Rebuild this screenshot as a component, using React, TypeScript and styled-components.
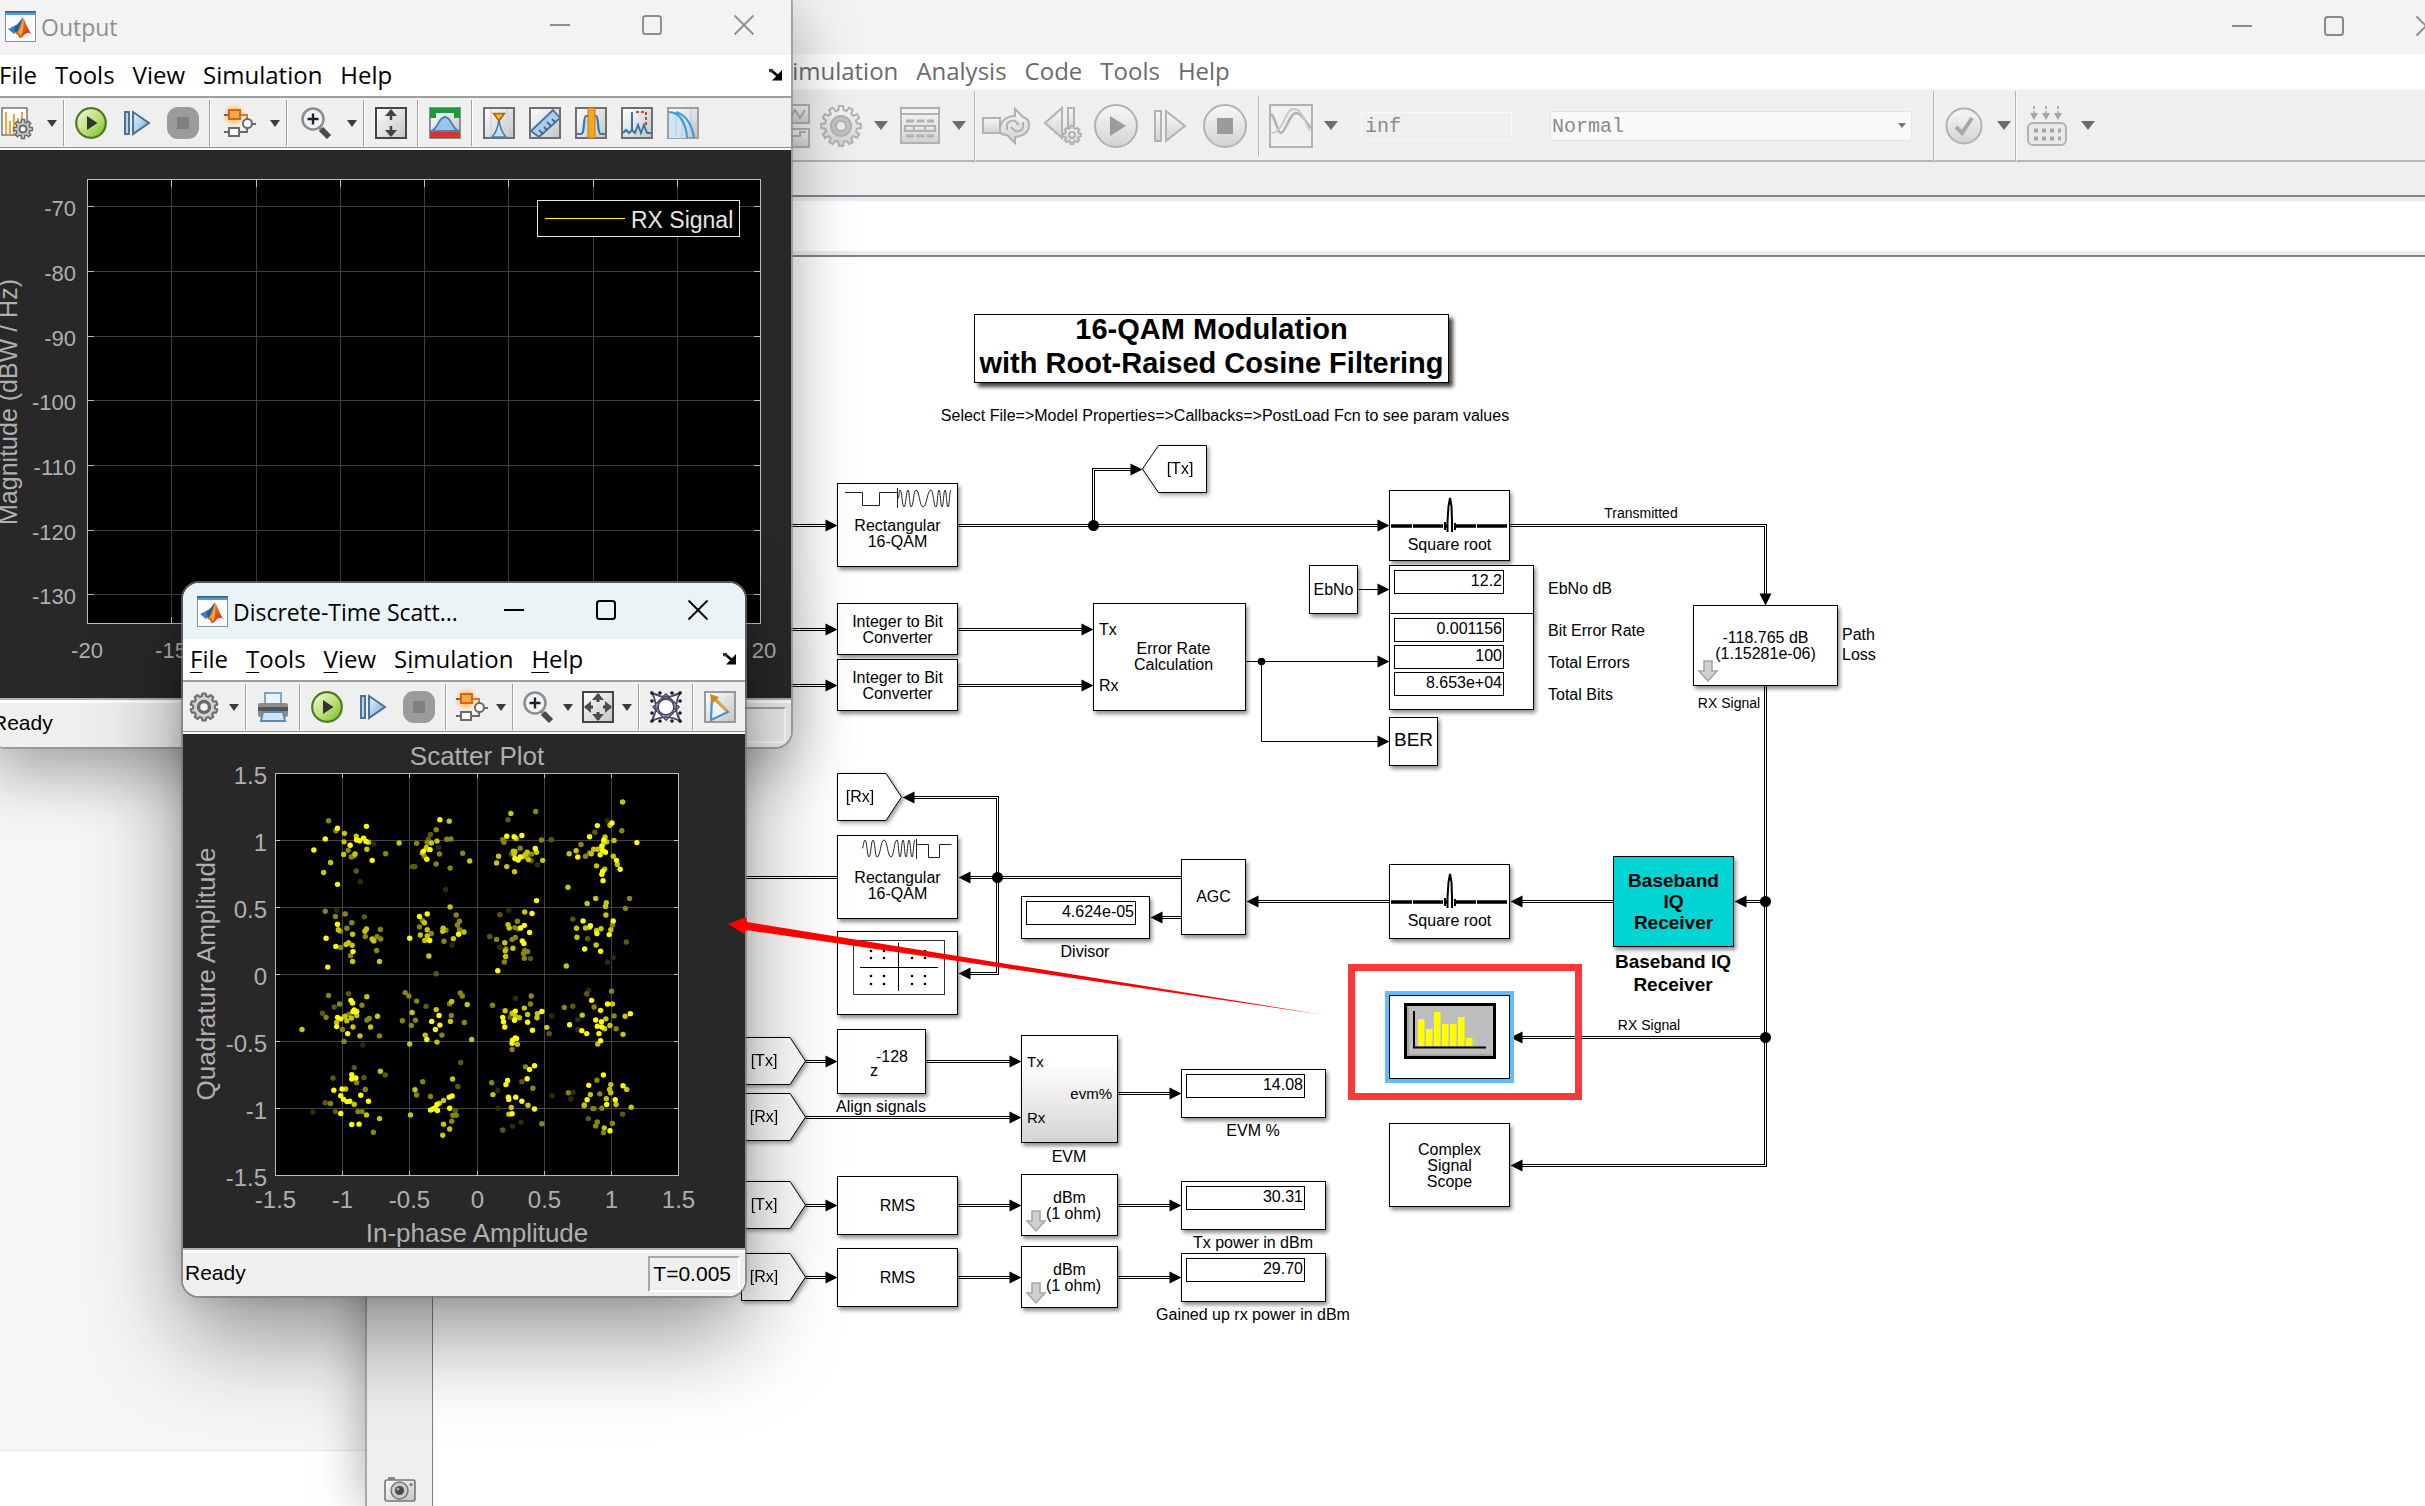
import React from "react";
import styled, { createGlobalStyle, css } from "styled-components";

const UI = `"Open Sans", "Noto Sans", sans-serif`;
const ARIAL = `"Liberation Sans", Arial, sans-serif`;

const GlobalStyle = createGlobalStyle`
  *, *::before, *::after { box-sizing: border-box; }
  html, body, #root { height: 100%; }
  body { margin: 0; background: #fff; font-family: ${UI}; overflow: hidden; }
  button { font: inherit; color: inherit; background: none; border: 0; padding: 0; cursor: default; }
  svg { display: block; overflow: visible; }
`;

/* ---------- desktop and windows ---------- */

const Desktop = styled.main`
  position: relative;
  height: 100%;
  min-height: 100vh;
  overflow: hidden;
`;

const PageBehind = styled.div`
  height: 1451px;
  background: #f5f6f8;
  border-bottom: 1px solid #e2e4e7;
`;

const Window = styled.section<{ $shadow: string; $radius?: string }>`
  position: absolute;
  display: flex;
  flex-direction: column;
  border-radius: ${(p) => p.$radius ?? "0"};
  box-shadow: ${(p) => p.$shadow};
`;

const ModelWindow = styled(Window)`
  left: 365px;
  right: -48px;
  top: 0;
  bottom: 0;
  border-left: 2px solid #a8a8a8;
  background: #efefef;
`;

const OutputWindow = styled(Window)`
  left: -10px;
  top: -12px;
  width: 801px;
  height: 759px;
`;

const ScatterWindow = styled(Window)`
  left: 183px;
  top: 583px;
  width: 562px;
  height: 713px;
`;

const Clip = styled.div`
  flex: 1;
  min-height: 0;
  display: flex;
  flex-direction: column;
  overflow: hidden;
  border-radius: 16px;
  background: #efefef;
`;

const TitleBar = styled.header<{ $h: number; $bg: string; $color: string; $top?: number; $left?: number }>`
  flex: none;
  display: flex;
  align-items: center;
  height: ${(p) => p.$h}px;
  padding: ${(p) => p.$top ?? 0}px 0 0 ${(p) => p.$left ?? 8}px;
  background: ${(p) => p.$bg};
  color: ${(p) => p.$color};
  font-size: 23px;
`;

const TitleText = styled.span`
  flex: 1;
  padding: 2px 0 0 5px;
  line-height: 30px;
  white-space: nowrap;
`;

const WindowControls = styled.div`
  display: flex;
  margin-left: auto;
`;

const WindowButton = styled.button`
  width: 92px;
  height: 50px;
  padding: 0 2px 2px 0;
  display: grid;
  place-items: center;
`;

const MenuBar = styled.nav<{ $h: number; $left: number; $color?: string }>`
  flex: none;
  display: flex;
  align-items: center;
  gap: 18px;
  height: ${(p) => p.$h}px;
  padding: 0 8px 2px ${(p) => p.$left}px;
  background: #fff;
  color: ${(p) => p.$color ?? "#000"};
  font-size: 24px;
  line-height: 32px;
`;

const MenuButton = styled.button`
  white-space: nowrap;
  u { text-underline-offset: 4px; text-decoration-thickness: 1px; }
`;

const DockButton = styled.button`
  margin-left: auto;
`;

const ToolBar = styled.div<{ $left?: number }>`
  flex: none;
  display: flex;
  align-items: center;
  height: 54px;
  padding-left: ${(p) => p.$left ?? 0}px;
  background: #efefef;
  border-top: 2px solid #9f9f9f;
  border-bottom: 2px solid #fff;
  box-shadow: inset 0 -1px 0 #8f8f8f;
`;

const ToolButton = styled.button`
  flex: none;
  width: 46px;
  height: 46px;
  display: grid;
  place-items: center;
`;

const SplitButton = styled.button<{ $wide?: boolean }>`
  flex: none;
  width: ${(p) => (p.$wide ? 69 : 59)}px;
  height: 46px;
  padding-left: ${(p) => (p.$wide ? 10 : 6)}px;
  display: flex;
  align-items: center;
  gap: ${(p) => (p.$wide ? 14 : 8)}px;
`;

const Divider = styled.span`
  flex: none;
  width: 2px;
  height: 46px;
  margin: 0 3px;
  border-left: 1px solid #a0a0a0;
  border-right: 1px solid #fff;
`;

const ChartArea = styled.div<{ $h: number }>`
  flex: none;
  height: ${(p) => p.$h}px;
  background: #282828;
`;

const StatusBar = styled.footer`
  flex: 1;
  display: flex;
  align-items: center;
  justify-content: space-between;
  padding: 0 5px 1px 2px;
  border-top: 2px solid #b0b0b0;
  box-shadow: inset 0 3px 0 #fff;
  background: #efefef;
  font: 21px/24px ${ARIAL};
  color: #000;
`;

const StatusCell = styled.output<{ $w?: number }>`
  min-width: ${(p) => p.$w ?? 0}px;
  height: 36px;
  margin-top: 3px;
  padding: 4px 7px 0 3px;
  border: 2px solid #fff;
  border-top-color: #a8a8a8;
  border-left-color: #a8a8a8;
`;

/* ---------- model window parts ---------- */

const ModelBars = styled.div`
  flex: none;
  height: 73px;
  display: flex;
  align-items: center;
  padding-left: 425px;
  border-top: 2px solid #f3f3f3;
  border-bottom: 2px solid #b6b6b6;
`;

const ModelTool = styled.button<{ $w: number }>`
  flex: none;
  width: ${(p) => p.$w}px;
  height: 60px;
  display: grid;
  place-items: center;
`;

const ModelCaret = styled.span<{ $w: number }>`
  flex: none;
  width: ${(p) => p.$w}px;
  display: grid;
  place-items: center;
`;

const ModelDivider = styled.span<{ $short?: boolean }>`
  flex: none;
  width: 2px;
  height: ${(p) => (p.$short ? 60 : 70)}px;
  border-left: 1px solid #b4b4b4;
  border-right: 1px solid #f8f8f8;
`;

const StopTime = styled.input`
  width: 151px;
  height: 28px;
  margin-left: 21px;
  padding: 2px 3px 0;
  border: 1px solid #f8f8f8;
  background: #efefef;
  color: #8a8a8a;
  font: 20px/24px "Liberation Mono", monospace;
`;

const SelectWrap = styled.div`
  display: flex;
  align-items: center;
  width: 362px;
  margin: 0 21px 0 38px;
  height: 30px;
  border: 1px solid #e4e4e4;
  border-radius: 3px;
  background: #f9f9f9;
  padding-right: 5px;
`;

const ModeSelect = styled.select`
  flex: 1;
  appearance: none;
  border: 0;
  background: none;
  padding: 2px 0 0 1px;
  color: #8a8a8a;
  font: 20px/24px "Liberation Mono", monospace;
`;

const Spacer = styled.div`
  flex: none;
  height: 33px;
`;

const PathBar = styled.div`
  flex: none;
  height: 62px;
  background: #fff;
  border: solid #80838f;
  border-width: 2px 0;
  box-shadow: inset 0 4px 0 #ececf0, inset 0 -4px 0 #ececf0;
`;

const Workspace = styled.div`
  flex: 1;
  min-height: 0;
  display: flex;
`;

const Palette = styled.aside`
  flex: none;
  width: 66px;
  display: flex;
  flex-direction: column;
  justify-content: flex-end;
  align-items: center;
  padding-bottom: 4px;
  border-right: 1px solid #7f8088;
`;

const Canvas = styled.div`
  position: relative;
  flex: 1;
  background: #fff;
  font: 16px/16px ${ARIAL};
  color: #000;
`;

const OX = 433;
const OY = 257;

const Wires = styled.svg`
  position: absolute;
  left: 0;
  top: 0;
`;

const NodeBox = styled.div<{ $x: number; $y: number; $w: number; $h: number; $pt?: number; $fill?: string }>`
  position: absolute;
  left: ${(p) => p.$x - OX}px;
  top: ${(p) => p.$y - OY}px;
  width: ${(p) => p.$w}px;
  height: ${(p) => p.$h}px;
  padding-top: ${(p) => p.$pt ?? 0}px;
  display: flex;
  flex-direction: column;
  align-items: center;
  justify-content: center;
  text-align: center;
  white-space: pre;
  border: 1px solid #000;
  background: ${(p) => p.$fill ?? "#fff"};
  box-shadow: 2px 3px 4px rgba(0, 0, 0, 0.45);
`;

const Title = styled(NodeBox)`
  margin: 0;
  padding-bottom: 5px;
  font-weight: 700;
  font-size: 29px;
  line-height: 34px;
  box-shadow: 4px 4px 4px rgba(0, 0, 0, 0.75);
`;

const IqReceiver = styled(NodeBox)`
  font-weight: 700;
  font-size: 19px;
  line-height: 21px;
`;

const BigNode = styled(NodeBox)`
  padding-bottom: 4px;
  font-size: 19px;
  line-height: 20px;
`;

const SelectedNode = styled(NodeBox)`
  box-shadow: 0 0 0 4px #63bdf8;
`;

const DisplayBox = styled(NodeBox)`
  align-items: flex-start;
  justify-content: flex-start;
  gap: 3px;
  padding: 4px;
`;

const Value = styled.output<{ $w: number }>`
  width: ${(p) => p.$w}px;
  height: 24px;
  padding: 2px 1px;
  border: 1px solid #000;
  text-align: right;
`;

const Label = styled.div<{ $x: number; $y: number; $size?: number; $lh?: number; $bold?: boolean; $left?: boolean }>`
  position: absolute;
  left: ${(p) => p.$x - OX}px;
  top: ${(p) => p.$y - OY}px;
  transform: translate(${(p) => (p.$left ? "0" : "-50%")}, -50%);
  font-size: ${(p) => p.$size ?? 16}px;
  line-height: ${(p) => p.$lh ?? 16}px;
  font-weight: ${(p) => (p.$bold ? 700 : 400)};
  text-align: ${(p) => (p.$left ? "left" : "center")};
  white-space: pre;
`;

const TagBox = styled.div<{ $x: number; $y: number }>`
  position: absolute;
  left: ${(p) => p.$x - OX}px;
  top: ${(p) => p.$y - OY}px;
  width: 65px;
  height: 48px;
  display: flex;
  align-items: center;
  filter: drop-shadow(2px 2px 2px rgba(0, 0, 0, 0.4));
`;

const TagText = styled.span<{ $flip?: boolean }>`
  position: relative;
  width: 46px;
  text-align: center;
  ${(p) => p.$flip && css`margin-left: 15px;`}
`;

const TagShape = styled.svg`
  position: absolute;
  inset: 0;
`;

const Annotation = styled.svg`
  position: absolute;
  left: 0;
  top: 0;
  width: 100%;
  height: 100%;
  pointer-events: none;
`;

/* ---------- icons ---------- */

const DefsSvg = styled.svg`
  position: absolute;
`;

const Defs = () => (
  <DefsSvg width="0" height="0" aria-hidden>
    <defs>
      <linearGradient id="green" x1="0" y1="0" x2="1" y2="1">
        <stop offset="0" stopColor="#f4fbe6" />
        <stop offset="0.6" stopColor="#b4dc6c" />
        <stop offset="1" stopColor="#6fb52c" />
      </linearGradient>
      <linearGradient id="blue" x1="0" y1="0" x2="1" y2="1">
        <stop offset="0" stopColor="#eef6fc" />
        <stop offset="1" stopColor="#6aa7dc" />
      </linearGradient>
      <linearGradient id="silver" x1="0" y1="0" x2="1" y2="1">
        <stop offset="0" stopColor="#ffffff" />
        <stop offset="1" stopColor="#c4c4c4" />
      </linearGradient>
      <linearGradient id="dim" x1="0" y1="0" x2="0" y2="1">
        <stop offset="0" stopColor="#f8f8f8" />
        <stop offset="1" stopColor="#d2d2d2" />
      </linearGradient>
      <linearGradient id="flame" x1="0" y1="0" x2="1" y2="1">
        <stop offset="0" stopColor="#f7c04a" />
        <stop offset="0.5" stopColor="#e5601e" />
        <stop offset="1" stopColor="#a81e10" />
      </linearGradient>
      <radialGradient id="glow">
        <stop offset="0.4" stopColor="#ffb347" stopOpacity="0.9" />
        <stop offset="1" stopColor="#ffcf80" stopOpacity="0" />
      </radialGradient>
    </defs>
  </DefsSvg>
);

const MatlabIcon = () => (
  <svg width="31" height="31" viewBox="0 0 31 31">
    <rect x="0.5" y="0.5" width="30" height="30" fill="#fbfbfd" stroke="#8b8f96" />
    <rect x="0" y="0" width="31" height="4" fill="#5d9ac8" />
    <path d="M0 0h31v1.500h-31z" fill="#2b5f8c" />
    <path d="M3 18l7-3.500 4 3.500-5 5z" fill="#3d7fc1" />
    <path d="M10 14.500c4-1 6-7 8-8l-3 13-3 3-2.500-2z" fill="#1d5fa0" />
    <path d="M18 6.500c2 2 5 13 9 17-3-3-6-2-8 .5-1 2-2.500 3-4.500 3-.5-2-2-4-4.500-4 4-3 6-11 8-16.500z" fill="url(#flame)" />
    <path d="M18 8c-1 5-3 11-5 14 2 0 3 3 3 4 2-4 3-13 2-18z" fill="#f6a534" />
  </svg>
);

const MinIcon = () => (
  <svg width="20" height="20" viewBox="0 0 20 20"><path d="M0 10h20" stroke="currentColor" strokeWidth="2" /></svg>
);
const MaxIcon = () => (
  <svg width="20" height="20" viewBox="0 0 20 20"><rect x="1" y="1" width="18" height="18" rx="2.500" fill="none" stroke="currentColor" strokeWidth="2" /></svg>
);
const CloseIcon = () => (
  <svg width="20" height="20" viewBox="0 0 20 20"><path d="M0.500 0.500l19 19M19.500 0.500l-19 19" stroke="currentColor" strokeWidth="1.800" /></svg>
);
const DockIcon = () => (
  <svg width="15" height="12" viewBox="0 0 15 12"><path d="M1 2h3l7 6" fill="none" stroke="#000" strokeWidth="2.600" /><path d="M14 1v10.500H4z" fill="#000" /><path d="M1 0h4v3H1z" fill="#333" /></svg>
);
const Caret = () => (
  <svg width="10" height="7" viewBox="0 0 10 7"><path d="M0 0h10L5 7z" fill="#3c3c3c" /></svg>
);
const DimCaret = () => (
  <svg width="14" height="9" viewBox="0 0 14 9"><path d="M0 0h14L7 9z" fill="#6b6d70" /></svg>
);

const Ico = ({ children, size = 32, box = 32 }: { children: React.ReactNode; size?: number; box?: number }) => (
  <svg width={size} height={size} viewBox={`0 0 ${box} ${box}`}>{children}</svg>
);

const gearPath = (cx: number, cy: number, r: number, teeth: number, depth: number) => {
  const pts: string[] = [];
  for (let i = 0; i < teeth; i++) {
    [-0.32, -0.2, 0.2, 0.32].forEach((o, k) => {
      const a = ((i + o) / teeth) * Math.PI * 2;
      const rr = k === 0 || k === 3 ? r - depth : r;
      pts.push(`${(cx + Math.sin(a) * rr).toFixed(2)} ${(cy - Math.cos(a) * rr).toFixed(2)}`);
    });
  }
  return `M${pts.join("L")}Z`;
};

const GearIcon = () => (
  <Ico>
    <path d={gearPath(15, 16, 13.5, 10, 2.5)} fill="#d4d4d4" stroke="#707070" strokeWidth="2.200" strokeLinejoin="round" />
    <circle cx="15" cy="16" r="5.500" fill="#f4f4f4" stroke="#6a6a6a" strokeWidth="3.400" />
  </Ico>
);

const SpectrumGearIcon = () => (
  <Ico>
    <rect x="1" y="1" width="25" height="27" fill="#fdfdfd" stroke="#777" strokeWidth="1.500" />
    <path d="M5 27V5M9 27V14M13 27V7M17 27V11M21 27V5" stroke="#f2a63a" strokeWidth="2" />
    <path d={gearPath(22, 22, 9.5, 8, 2.5)} fill="#c9c9c9" stroke="#6b6b6b" strokeWidth="1.500" />
    <circle cx="22" cy="22" r="3.500" fill="#f5f5f5" stroke="#666" strokeWidth="2" />
  </Ico>
);

const RunIcon = () => (
  <Ico>
    <circle cx="16" cy="16" r="14.800" fill="url(#green)" stroke="#4f7a22" strokeWidth="2.200" />
    <path d="M12 9l10.500 7L12 23z" fill="#333" />
  </Ico>
);
const StepIcon = () => (
  <Ico>
    <rect x="4" y="5" width="4" height="22" fill="#b5d5f0" stroke="#4d7295" strokeWidth="2" />
    <path d="M12 5L28 16 12 27z" fill="url(#blue)" stroke="#4d7295" strokeWidth="2" />
  </Ico>
);
const StopIcon = () => (
  <Ico>
    <rect x="0" y="0" width="32" height="32" rx="11" fill="#9b9b9b" />
    <rect x="10" y="10" width="12" height="12" fill="#7f7f7f" />
  </Ico>
);
const ModelIcon = () => (
  <Ico>
    <circle cx="10" cy="8" r="12" fill="url(#glow)" />
    <path d="M0 8h5M0 25h5M15 25h8v-6M28 17h4" fill="none" stroke="#6b6b6b" strokeWidth="2" />
    <path d="M15 8h8v5" fill="none" stroke="#d8762a" strokeWidth="2" />
    <rect x="5" y="3" width="11" height="9" fill="#f7a548" stroke="#c96a1c" strokeWidth="2" />
    <circle cx="23.500" cy="16.500" r="4.500" fill="#fff" stroke="#6b6b6b" strokeWidth="2" />
    <rect x="5" y="21" width="10" height="8" fill="#fff" stroke="#6b6b6b" strokeWidth="2" />
  </Ico>
);
const ZoomIcon = () => (
  <Ico>
    <path d="M17 19l3 3" stroke="#888" strokeWidth="3" />
    <path d="M20 22l8 8" stroke="#4a4a4a" strokeWidth="6" />
    <circle cx="12" cy="12" r="10.500" fill="#eef6fc" stroke="#8c8c8c" strokeWidth="2.500" />
    <path d="M12 6.500v11M6.500 12h11" stroke="#222" strokeWidth="2.400" />
  </Ico>
);
const Frame = ({ stroke = "#6f6f6f" }: { stroke?: string }) => (
  <rect x="1" y="1" width="30" height="30" fill="url(#silver)" stroke={stroke} strokeWidth="2" />
);
const AutoscaleIcon = () => (
  <Ico>
    <Frame stroke="#454545" />
    <path d="M16 3v10M16 19v10" stroke="#444" strokeWidth="2.500" />
    <path d="M10 9l6-7 6 7zM10 23l6 7 6-7z" fill="#444" />
  </Ico>
);
const MaskIcon = () => (
  <Ico>
    <Frame stroke="#8a8f95" />
    <path d="M1 1h30v10h-6V6H7v5H1z" fill="#1d9a3a" />
    <path d="M1 24c8 0 8-14 15-14s7 14 15 14z" fill="#9cc6e8" stroke="#4a84b8" strokeWidth="2" />
    <rect x="1" y="25" width="30" height="6" fill="#d9342b" />
  </Ico>
);
const CursorIcon = () => (
  <Ico>
    <Frame />
    <path d="M8 2v28M24 2v28" stroke="#cfd6de" strokeWidth="1.500" />
    <path d="M9 30c4-4 6-9 7-18 1 9 3 14 7 18z" fill="#c4dff3" stroke="#4a7da8" strokeWidth="1.600" />
    <path d="M10.500 6.500h11L16 14z" fill="#f6b32c" stroke="#96671a" strokeWidth="1.500" />
  </Ico>
);
const RulerIcon = () => (
  <Ico>
    <Frame />
    <path d="M2 24L24 3l7 8L10 30z" fill="#a9cdea" stroke="#46739c" strokeWidth="1.800" />
    <path d="M14 27l-4-4M18 23l-3-3M22 19l-4-4M26 15l-3-3" stroke="#2f5578" strokeWidth="1.600" />
  </Ico>
);
const ChannelIcon = () => (
  <Ico>
    <Frame />
    <path d="M2 27h4c4 0 2-18 5-18h10c3 0 1 18 5 18h4" fill="#c4dff3" stroke="#3d76a8" strokeWidth="2.200" />
    <rect x="13" y="1" width="7" height="30" fill="#f5a81e" stroke="#c27c10" />
  </Ico>
);
const DistortionIcon = () => (
  <Ico>
    <Frame />
    <path d="M2 26l3-3 3 3 3-3V5v18l3 3 3-8 3 8 3-8 3 8h4" fill="none" stroke="#2f76ac" strokeWidth="2" />
    <path d="M15 5h10v13" fill="none" stroke="#c9432a" strokeWidth="2" strokeDasharray="3 2" />
  </Ico>
);
const CcdfIcon = () => (
  <Ico>
    <Frame stroke="#a0a0a0" />
    <path d="M2 5c10 0 17 10 18 26H2z" fill="#cfe4f6" />
    <path d="M9 10v20M15 16v14M24 3v27" stroke="#b8c8d8" strokeWidth="1" />
    <path d="M2 5c10 0 17 10 18 26M9 5c9 3 16 12 18 26" fill="none" stroke="#3d9bdc" strokeWidth="2.200" />
  </Ico>
);
const PrinterIcon = () => (
  <Ico>
    <path d="M8 2h16v12H8z" fill="#e8f3fc" stroke="#7fa6c8" strokeWidth="2" />
    <rect x="1" y="12" width="30" height="14" rx="2" fill="#8d8d8d" />
    <path d="M1 16h30v4H1z" fill="#555" />
    <path d="M6 21h20l2 9H4z" fill="#cfe4f6" stroke="#5f88ad" strokeWidth="2" />
  </Ico>
);
const FitIcon = () => (
  <Ico>
    <Frame stroke="#454545" />
    <path d="M16 3v8M16 21v8M3 16h8M21 16h8" stroke="#444" strokeWidth="3" />
    <path d="M10 9l6-7 6 7zM10 23l6 7 6-7zM9 10l-7 6 7 6zM23 10l7 6-7 6z" fill="#4d4d4d" />
  </Ico>
);
const TrajectoryIcon = () => (
  <Ico>
    <path d="M2 2h28v28H2z" fill="#fff" />
    <path d="M2 2c9 5 19 5 28 0-5 9-5 19 0 28-9-5-19-5-28 0 5-9 5-19 0-28zM2 2c12 2 26 16 28 28M30 2C18 4 4 18 2 30M16 3l13 13-13 13L3 16z" fill="none" stroke="#4b4769" strokeWidth="1.600" />
    <circle cx="16" cy="16" r="8" fill="#fff" stroke="#4b4769" strokeWidth="1.800" />
    {[[2, 2], [10, 2], [22, 2], [30, 2], [2, 10], [2, 22], [30, 10], [30, 22], [2, 30], [10, 30], [22, 30], [30, 30]].map(([x, y]) => (
      <circle key={`${x}-${y}`} cx={x} cy={y} r="1.800" fill="#1c1c1c" />
    ))}
  </Ico>
);
const ReferenceIcon = () => (
  <Ico>
    <Frame stroke="#9a9a9a" />
    <path d="M8 6l16 15L7 29z" fill="#e9f3fb" stroke="#4d8fc9" strokeWidth="2.200" />
    <path d="M23 20L11 8" stroke="#e0a02c" strokeWidth="3" />
    <path d="M6 3l9 3-7 7z" fill="#c98a1c" />
  </Ico>
);

const DIM = "#b2b2b2";
const CameraIcon = () => (
  <svg width="32" height="25" viewBox="0 0 32 25">
    <path d="M4 0h7v3H4z" fill="#8a8a8a" />
    <rect x="1" y="3" width="30" height="21" rx="2" fill="url(#silver)" stroke="#777" strokeWidth="1.600" />
    <circle cx="15.500" cy="13.500" r="8.500" fill="#c9c9c9" stroke="#777" strokeWidth="1.500" />
    <circle cx="15.500" cy="13.500" r="4.500" fill="#4a4a4a" />
    <circle cx="14" cy="12" r="1.500" fill="#aaa" />
    <circle cx="27" cy="7.500" r="1.500" fill="#777" />
  </svg>
);

/* ---------- spectrum chart ---------- */

const SpectrumChart = () => {
  const xs = Array.from({ length: 9 }, (_, i) => 87 + i * 84.25);
  const ys = [206, 271, 336, 400, 465, 530, 594];
  const named: [number, string][] = [[87, "-20"], [171, "-15"], [764, "20"]];
  return (
    <svg width="801" height="548" viewBox="-10 150 801 548" fontFamily={ARIAL} fontSize="22" fill="#afafaf">
      <rect x="87.500" y="179.500" width="673" height="444" fill="#000" />
      <g stroke="#3e3e3e" strokeWidth="1">
        {xs.slice(1, 8).map((x) => <path key={x} d={`M${Math.round(x) + 0.5} 180V623`} />)}
        {ys.map((y) => <path key={y} d={`M88 ${y + 0.5}H761`} />)}
      </g>
      <g stroke="#bdbdbd" strokeWidth="1">
        {xs.slice(1, 8).map((x) => <path key={x} d={`M${Math.round(x) + 0.5} 180v7M${Math.round(x) + 0.5} 623v-6`} />)}
        {ys.map((y) => <path key={y} d={`M88 ${y + 0.5}h6M761 ${y + 0.5}h-7`} />)}
      </g>
      <rect x="87.500" y="179.500" width="673" height="444" fill="none" stroke="#bdbdbd" />
      {ys.map((y, i) => <text key={y} x="76" y={y + 10} textAnchor="end">{-70 - i * 10}</text>)}
      {named.map(([x, t]) => <text key={t} x={x} y="658" textAnchor="middle">{t}</text>)}
      <text transform="translate(17 402) rotate(-90)" textAnchor="middle" fontSize="25">Magnitude (dBW / Hz)</text>
      <rect x="537.500" y="200.500" width="202" height="36" fill="#000" stroke="#e6e6e6" />
      <path d="M545 218.500h80" stroke="#ffff00" />
      <text x="631" y="228" fontSize="23" fill="#e6e6e6">RX Signal</text>
    </svg>
  );
};

/* ---------- constellation chart ---------- */

/* x, y in chart units (988 by 1088 across the axes), brightness 1-5 */
const SAMPLES: number[][] = [
  [130,128,3],[152,148,5],[148,155,3],[169,162,4],[122,177,5],[94,207,5],[223,143,5],[198,170,4],[216,175,5],[199,180,5],[222,184,5],[228,186,4],[168,185,4],[183,194,5],[241,191,1],[224,205,4],[167,219,4],[195,218,4],[186,226,3],[192,223,3],[237,235,5],[270,217,3],[303,188,4],[135,241,4],[118,268,4],[198,264,2],[208,292,1],[152,300,5],[178,208,3],[206,182,5],
  [403,125,5],[426,129,4],[394,152,3],[380,165,2],[375,177,2],[420,178,3],[430,177,3],[346,189,3],[372,186,3],[382,188,4],[396,183,4],[370,200,4],[363,210,5],[376,206,4],[400,200,1],[402,218,3],[371,232,5],[365,224,3],[394,245,3],[342,252,2],[336,252,2],[428,256,3],[459,216,3],[476,237,4],[417,314,1],[379,206,5],[360,215,4],
  [577,108,4],[570,125,2],[638,103,3],[567,170,5],[557,179,3],[585,171,5],[604,168,5],[590,176,4],[560,186,3],[652,180,3],[676,179,2],[637,203,5],[640,213,4],[600,202,3],[583,210,4],[585,218,4],[547,224,4],[542,242,4],[587,230,5],[595,234,5],[607,225,4],[617,213,4],[620,233,4],[655,235,4],[627,236,2],[642,247,1],[567,252,4],[586,266,4],[617,226,3],[587,211,4],[579,218,2],[600,226,5],[612,220,4],[628,218,3],
  [851,77,4],[825,134,5],[814,128,1],[789,141,5],[820,140,4],[849,155,3],[783,159,2],[770,171,5],[830,181,4],[886,187,5],[749,192,3],[737,209,4],[720,217,4],[741,226,5],[760,224,3],[774,217,4],[790,205,4],[780,205,4],[800,197,5],[804,189,4],[812,185,4],[802,208,5],[809,213,5],[796,220,5],[828,224,4],[836,235,5],[838,246,4],[845,259,5],[787,250,4],[807,259,4],[802,265,5],[800,273,5],[803,290,5],[717,308,4],[808,172,4],[805,180,5],[770,215,3],
  [122,373,3],[150,370,1],[147,387,3],[171,380,3],[218,388,2],[187,404,3],[152,408,5],[154,423,4],[159,427,3],[175,419,3],[189,435,4],[124,446,5],[223,421,4],[219,427,4],[220,441,3],[237,448,4],[249,442,3],[257,422,3],[241,453,4],[148,468,5],[160,471,3],[173,463,4],[179,458,4],[188,465,4],[190,482,5],[184,493,3],[189,509,4],[248,479,3],[255,509,4],[128,524,5],[258,448,3],
  [428,361,4],[372,380,5],[353,387,5],[365,404,4],[360,398,3],[443,383,3],[451,400,3],[446,410,3],[353,415,3],[372,423,4],[382,433,3],[355,437,4],[372,440,4],[366,452,4],[378,452,5],[329,446,5],[411,419,4],[410,427,4],[418,424,3],[451,423,3],[462,429,4],[449,435,5],[436,447,4],[413,454,3],[433,464,1],[376,494,4],[394,542,2],
  [640,344,5],[550,382,2],[572,370,1],[611,375,4],[629,379,5],[570,409,4],[593,400,3],[610,411,5],[601,418,5],[573,418,4],[595,420,3],[587,417,3],[623,430,5],[525,441,2],[542,449,3],[562,458,4],[605,453,5],[609,460,5],[588,444,3],[580,449,3],[550,470,1],[565,475,3],[582,473,4],[563,480,4],[611,479,3],[608,487,3],[564,495,4],[561,510,3],[610,500,3],[625,501,2],[545,534,5],[618,482,3],
  [785,338,4],[764,352,4],[811,350,4],[809,360,4],[868,338,3],[858,365,3],[729,394,2],[754,399,5],[810,383,4],[828,399,5],[826,410,3],[738,419,4],[760,418,4],[772,412,5],[770,416,4],[798,420,4],[787,425,4],[822,423,4],[739,443,4],[788,433,5],[818,436,5],[765,447,2],[860,456,2],[758,475,5],[786,464,4],[797,481,5],[828,498,1],[814,511,1],[713,521,4],
  [130,601,3],[179,596,2],[224,604,4],[157,624,3],[185,614,5],[189,621,5],[212,627,3],[144,632,2],[115,649,2],[124,660,3],[152,660,5],[170,657,4],[180,652,3],[190,645,5],[199,644,5],[199,655,4],[150,674,4],[160,664,5],[175,669,4],[186,662,4],[150,685,5],[164,693,3],[190,686,4],[224,667,3],[230,663,3],[250,657,4],[233,686,4],[177,704,5],[207,710,4],[255,710,3],[168,725,3],[214,735,1],[65,693,4],[193,640,5],
  [318,593,3],[327,602,3],[346,616,3],[369,630,2],[335,647,4],[394,639,4],[401,655,5],[343,668,3],[311,669,3],[333,682,3],[383,671,5],[403,681,5],[392,693,5],[367,708,4],[371,720,5],[408,708,3],[396,727,4],[329,732,4],[432,617,4],[427,623,3],[431,655,3],[429,671,4],[453,594,3],[458,602,3],[470,625,4],[463,674,3],[481,720,4],
  [532,627,3],[588,609,1],[627,602,3],[563,642,4],[588,643,5],[625,624,3],[610,635,4],[557,660,5],[559,672,5],[562,686,5],[588,657,4],[580,649,4],[575,660,2],[598,661,4],[586,668,5],[618,652,4],[642,650,4],[653,644,5],[641,661,4],[618,673,5],[677,656,1],[665,687,4],[630,695,5],[671,704,2],[588,716,5],[591,717,5],[581,722,5],[580,730,5],[593,733,4],[580,747,3],
  [768,587,1],[763,596,2],[824,589,3],[775,614,5],[708,633,3],[729,630,2],[781,632,3],[814,624,5],[826,624,4],[797,641,5],[752,654,4],[741,666,1],[785,667,5],[799,672,5],[810,664,4],[830,656,3],[857,657,4],[870,650,5],[721,680,5],[789,684,5],[800,686,5],[835,691,3],[751,696,5],[763,704,5],[793,704,5],[852,706,4],[797,723,5],[790,732,4],[741,693,1],[820,682,4],[807,691,4],
  [193,796,2],[141,824,2],[187,815,5],[187,827,5],[197,824,5],[217,823,2],[257,806,4],[269,816,2],[199,837,3],[143,857,5],[163,854,5],[172,854,4],[160,872,5],[220,855,3],[209,871,5],[228,887,5],[167,882,5],[175,888,5],[182,887,5],[122,891,2],[135,893,3],[92,916,1],[147,915,2],[160,920,5],[193,895,4],[202,915,3],[212,915,3],[223,924,4],[255,934,4],[187,950,5],[205,949,5],[240,971,3],
  [454,782,2],[361,834,3],[342,856,4],[346,870,3],[434,827,4],[447,847,2],[380,874,3],[433,873,5],[426,876,5],[412,885,4],[396,896,5],[391,905,5],[397,912,5],[380,911,5],[386,908,5],[427,906,5],[441,912,2],[443,925,3],[435,925,3],[331,924,4],[432,941,3],[412,949,4],[427,962,4],[410,979,4],[402,892,4],
  [635,791,5],[623,801,5],[613,794,3],[617,826,5],[604,834,2],[530,837,3],[569,831,5],[565,842,5],[533,869,4],[545,858,1],[631,852,3],[571,876,5],[589,876,5],[572,882,5],[604,887,5],[619,898,4],[635,908,5],[678,872,1],[545,906,1],[578,904,4],[572,922,4],[580,921,5],[602,944,1],[581,955,1],[557,965,2],[653,948,3],
  [804,816,5],[788,830,3],[768,844,5],[822,842,4],[819,855,4],[852,845,5],[861,855,4],[718,864,3],[730,863,1],[772,869,4],[764,883,5],[795,867,3],[822,864,4],[724,881,1],[757,897,4],[757,900,3],[778,907,3],[812,896,5],[833,883,5],[835,896,4],[872,903,4],[782,907,2],[800,906,3],[767,934,2],[851,922,2],[789,943,3],[785,954,3],[826,947,3],[806,959,4],[820,967,5],[804,972,3],[811,880,4],
];
const YELLOWS = ["", "#2e2e05", "#5c5c08", "#87870c", "#c6c60c", "#ffff00"];

const ScatterChart = () => {
  const X = (v: number) => 275.5 + (v * 403) / 988;
  const Y = (v: number) => 773.5 + (v * 402) / 1088;
  const ticks = [0, 1, 2, 3, 4, 5, 6];
  const gx = ticks.map((i) => Math.round(275 + i * 67.17) + 0.5);
  const gy = ticks.map((i) => Math.round(773 + i * 67) + 0.5);
  const names = ["1.5", "1", "0.5", "0", "-0.5", "-1", "-1.5"];
  return (
    <svg width="562" height="514" viewBox="183 734 562 514" fontFamily={ARIAL} fontSize="24" fill="#afafaf">
      <rect x="275.500" y="773.500" width="403" height="402" fill="#000" />
      <g stroke="#444">
        {gx.slice(1, 6).map((x) => <path key={x} d={`M${x} 774V1175`} />)}
        {gy.slice(1, 6).map((y) => <path key={y} d={`M276 ${y}H678`} />)}
      </g>
      <g stroke="#bdbdbd">
        {gx.slice(1, 6).map((x) => <path key={x} d={`M${x} 774v4M${x} 1175v-4`} />)}
        {gy.slice(1, 6).map((y) => <path key={y} d={`M276 ${y}h4M678 ${y}h-4`} />)}
      </g>
      <rect x="275.500" y="773.500" width="403" height="402" fill="none" stroke="#bdbdbd" />
      {SAMPLES.slice().sort((a, b) => a[2] - b[2]).map(([x, y, b], i) => (
        <circle key={i} cx={X(x)} cy={Y(y)} r="2.700" fill={YELLOWS[b]} />
      ))}
      {gy.map((y, i) => <text key={y} x="267" y={Math.round(y) + 10} textAnchor="end">{names[i]}</text>)}
      {gx.map((x, i) => <text key={x} x={x} y="1208" textAnchor="middle">{names[6 - i]}</text>)}
      <g fontSize="26" textAnchor="middle">
        <text x="477" y="765">Scatter Plot</text>
        <text x="477" y="1242">In-phase Amplitude</text>
        <text transform="translate(215 974) rotate(-90)">Quadrature Amplitude</text>
      </g>
    </svg>
  );
};

/* ---------- block diagram ---------- */

const BUS = [
  "M790 525H827", "M958 525H1380", "M1093 525V469H1132", "M790 629H827", "M790 685H827", "M958 629H1083", "M958 685H1083",
  "M1510 525H1765V595", "M1765 686V1165H1520", "M1765 901H1744", "M1765 1037H1520", "M1613 901H1520", "M1389 901H1256",
  "M1181 877H967", "M997 877V797H911", "M997 877V973H967", "M1181 917H1160", "M745 877H837",
  "M805 1061H827", "M926 1061H1011", "M805 1117H1011", "M1118 1093H1171",
  "M805 1205H827", "M958 1205H1011", "M1118 1205H1171", "M805 1277H827", "M958 1277H1011", "M1118 1277H1171",
];
const THIN = ["M1246 661H1380", "M1261 661V741H1380", "M1358 589H1380"];
const RIGHT: number[][] = [
  [837, 525], [1389, 525], [1142, 469], [837, 629], [837, 685], [1093, 629], [1093, 685], [1389, 661], [1389, 741], [1389, 589],
  [837, 1061], [1021, 1061], [1021, 1117], [1181, 1093], [837, 1205], [1021, 1205], [1181, 1205], [837, 1277], [1021, 1277], [1181, 1277],
];
const LEFT: number[][] = [[1734, 901], [1510, 901], [1510, 1037], [1510, 1165], [1246, 901], [958, 877], [902, 797], [958, 973], [1150, 917]];

const DiagramWires = () => (
  <Wires width="1992" height="1249" viewBox={`${OX} ${OY} 1992 1249`} aria-hidden>
    <g transform="translate(0.5 0.5)" fill="none">
      {BUS.map((d) => <path key={d} d={d} stroke="#000" strokeWidth="3" />)}
      {BUS.map((d) => <path key={d} d={d} stroke="#fff" strokeWidth="1" />)}
      {THIN.map((d) => <path key={d} d={d} stroke="#000" strokeWidth="1" />)}
      <g fill="#000">
        {RIGHT.map(([x, y]) => <path key={`${x},${y}`} d={`M${x} ${y}l-12-6v12z`} />)}
        {LEFT.map(([x, y]) => <path key={`${x},${y}`} d={`M${x} ${y}l12-6v12z`} />)}
        <path d="M1765 605l-6-12h12z" />
        <circle cx="1093" cy="525" r="5.500" />
        <circle cx="1261" cy="661" r="3.800" />
        <circle cx="997" cy="877" r="5.500" />
        <circle cx="1765" cy="901" r="5.500" />
        <circle cx="1765" cy="1037" r="5.500" />
      </g>
    </g>
  </Wires>
);

const Glyph = styled.svg<{ $x: number; $y: number }>`
  position: absolute;
  left: ${(p) => p.$x}px;
  top: ${(p) => p.$y}px;
`;

/* Curve through alternating extremes at the given x positions. */
const wave = (xs: number[], top: number, bottom: number) => {
  const mid = (top + bottom) / 2;
  let d = `M${xs[0]} ${mid}`;
  for (let i = 1; i < xs.length; i++) {
    const y0 = i === 1 ? mid : i % 2 ? bottom : top;
    const y1 = i % 2 ? top : bottom;
    const h = (xs[i - 1] + xs[i]) / 2;
    d += `C${h} ${y0} ${h} ${y1} ${xs[i]} ${y1}`;
  }
  return d;
};

const QamGlyph = ({ demod }: { demod?: boolean }) =>
  demod ? (
    <Glyph $x={24} $y={3} width="90" height="22" viewBox="0 0 90 22" fill="none" stroke="#222">
      <path d={wave([0, 3, 7, 11, 15, 22, 29, 35, 38, 41, 44, 47, 50, 53], 1, 18)} />
      <path d="M54.500 0v20M54.500 5.500h12v13h11v-13h12" />
    </Glyph>
  ) : (
    <Glyph $x={7} $y={1} width="107" height="24" viewBox="0 0 107 24" fill="none" stroke="#222">
      <path d="M0 7.500h17.500v13h17v-13h18M52.500 3v20" />
      <path d={wave([53, 55, 59, 63, 66, 71, 78, 86, 91, 94, 97, 100, 103, 106], 5, 22)} />
    </Glyph>
  );

const FilterGlyph = ({ top }: { top: number }) => (
  <Glyph $x={0} $y={top} width="119" height="38" viewBox="0 0 119 38">
    <path d="M1 30h56M65 30h53" stroke="#000" strokeWidth="3.600" strokeDasharray="21 1 30 1" />
    <path d="M55 26v8M57.500 36V26l1-16 1.500-8 1.500 8 .5 16v10M65 27v7" fill="none" stroke="#000" strokeWidth="2" />
  </Glyph>
);

const DownArrow = styled.svg`
  position: absolute;
  left: 4px;
  bottom: 3px;
`;
const LinkArrow = () => (
  <DownArrow width="20" height="22" viewBox="0 0 20 22">
    <path d="M6 1h8v10h5l-9 10L1 11h5z" fill="#d0d0d0" stroke="#a4a4a4" strokeWidth="1.500" />
  </DownArrow>
);

const Tag = ({ x, y, children, flip }: { x: number; y: number; children: string; flip?: boolean }) => (
  <TagBox $x={x} $y={y}>
    <TagShape width="65" height="48" viewBox="0 0 65 48">
      <path d={flip ? "M64.500.5V47.500H16.500L.5 24 16.500.5z" : "M.5.5H49L64.500 24 49 47.500H.5z"} fill="#fff" stroke="#000" />
    </TagShape>
    <TagText $flip={flip}>{children}</TagText>
  </TagBox>
);

const Constellation = () => (
  <Glyph $x={15} $y={8} width="92" height="55" viewBox="0 0 92 55">
    <rect x="0.500" y="0.500" width="91" height="54" fill="none" stroke="#333" />
    <path d="M45.500 3v48M7 27.500h78" stroke="#000" />
    {[18, 31, 59, 72].map((x) => [11, 18, 36, 44].map((y) => <circle key={`${x}-${y}`} cx={x} cy={y} r="1.300" />))}
  </Glyph>
);

const SpectrumGlyph = () => (
  <Glyph $x={14} $y={7} width="92" height="56" viewBox="0 0 92 56">
    <rect x="1.500" y="1.500" width="89" height="53" fill="#bdbdbd" stroke="#000" strokeWidth="3" />
    <path d="M4 4v48h84" fill="none" stroke="#888" />
    {[[14, 16], [22, 26], [30, 9], [38, 21], [46, 21], [54, 14], [62, 35]].map(([x, y]) => (
      <rect key={x} x={x} y={y} width="6.500" height={43 - y} fill="#ffff00" />
    ))}
    <path d="M10 8v36.500h72" fill="none" stroke="#000" strokeWidth="2" />
  </Glyph>
);

const PortText = styled.span<{ $x: number; $y: number; $right?: boolean }>`
  position: absolute;
  ${(p) => (p.$right ? `right: ${p.$x}px;` : `left: ${p.$x}px;`)}
  top: ${(p) => p.$y}px;
`;

const Shifted = styled.span`
  padding-left: 8px;
`;

const EvmNode = styled(NodeBox)`
  font-size: 15px;
`;

const Diagram = () => (
  <Canvas>
    <DiagramWires />
    <Title as="h1" $x={974} $y={314} $w={475} $h={69}>{"16-QAM Modulation\nwith Root-Raised Cosine Filtering"}</Title>
    <Label $x={1225} $y={416}>{"Select File=>Model Properties=>Callbacks=>PostLoad Fcn to see param values"}</Label>

    <NodeBox $x={837} $y={483} $w={121} $h={84} $pt={18}><QamGlyph />{"Rectangular\n16-QAM"}</NodeBox>
    <Tag x={1142} y={445} flip>[Tx]</Tag>
    <NodeBox $x={1389} $y={490} $w={121} $h={71} $pt={38}><FilterGlyph top={5} />Square root</NodeBox>
    <Label $x={1641} $y={513} $size={14}>Transmitted</Label>
    <NodeBox $x={1693} $y={605} $w={145} $h={81}>{"-118.765 dB\n(1.15281e-06)"}<LinkArrow /></NodeBox>
    <Label $x={1842} $y={645} $lh={20} $left>{"Path\nLoss"}</Label>
    <Label $x={1729} $y={703} $size={14}>RX Signal</Label>

    <NodeBox $x={837} $y={603} $w={121} $h={52} $pt={2}>{"Integer to Bit\nConverter"}</NodeBox>
    <NodeBox $x={837} $y={659} $w={121} $h={52} $pt={2}>{"Integer to Bit\nConverter"}</NodeBox>
    <NodeBox $x={1093} $y={603} $w={153} $h={108}>
      <PortText $x={5} $y={18}>Tx</PortText>
      <PortText $x={5} $y={74}>Rx</PortText>
      <Shifted>{"Error Rate\nCalculation"}</Shifted>
    </NodeBox>
    <NodeBox $x={1309} $y={565} $w={49} $h={49}>EbNo</NodeBox>
    <DisplayBox $x={1389} $y={565} $w={145} $h={49}><Value $w={110}>12.2</Value></DisplayBox>
    <DisplayBox $x={1389} $y={613} $w={145} $h={97}>
      <Value $w={110}>0.001156</Value>
      <Value $w={110}>100</Value>
      <Value $w={110}>8.653e+04</Value>
    </DisplayBox>
    <BigNode $x={1389} $y={717} $w={49} $h={49}>BER</BigNode>
    <Label $x={1548} $y={589} $left>EbNo dB</Label>
    <Label $x={1548} $y={631} $left>Bit Error Rate</Label>
    <Label $x={1548} $y={663} $left>Total Errors</Label>
    <Label $x={1548} $y={695} $left>Total Bits</Label>

    <Tag x={837} y={773}>[Rx]</Tag>
    <NodeBox $x={837} $y={835} $w={121} $h={84} $pt={18}><QamGlyph demod />{"Rectangular\n16-QAM"}</NodeBox>
    <NodeBox $x={837} $y={931} $w={121} $h={84}><Constellation /></NodeBox>
    <DisplayBox $x={1021} $y={896} $w={129} $h={43}><Value $w={110}>4.624e-05</Value></DisplayBox>
    <Label $x={1085} $y={952}>Divisor</Label>
    <NodeBox $x={1181} $y={859} $w={65} $h={76}>AGC</NodeBox>
    <NodeBox $x={1389} $y={864} $w={121} $h={75} $pt={38}><FilterGlyph top={7} />Square root</NodeBox>
    <IqReceiver $x={1613} $y={856} $w={121} $h={91} $fill="#02d3d3">{"Baseband\nIQ\nReceiver"}</IqReceiver>
    <Label $x={1673} $y={973} $size={19} $lh={23} $bold>{"Baseband IQ\nReceiver"}</Label>
    <Label $x={1649} $y={1025} $size={14}>RX Signal</Label>
    <SelectedNode $x={1389} $y={995} $w={121} $h={84}><SpectrumGlyph /></SelectedNode>
    <NodeBox $x={1389} $y={1123} $w={121} $h={84} $pt={2}>{"Complex\nSignal\nScope"}</NodeBox>

    <Tag x={741} y={1037}>[Tx]</Tag>
    <Tag x={741} y={1093}>[Rx]</Tag>
    <NodeBox $x={837} $y={1029} $w={89} $h={65}>
      <PortText $x={17} $y={19} $right>-128</PortText>
      <PortText $x={32} $y={33}>z</PortText>
    </NodeBox>
    <Label $x={881} $y={1107}>Align signals</Label>
    <EvmNode $x={1021} $y={1035} $w={97} $h={108} $fill="linear-gradient(#fff 25%, #d4d4d4)">
      <PortText $x={5} $y={18}>Tx</PortText>
      <PortText $x={5} $y={74}>Rx</PortText>
      <PortText $x={5} $y={50} $right>evm%</PortText>
    </EvmNode>
    <Label $x={1069} $y={1157}>EVM</Label>
    <DisplayBox $x={1181} $y={1069} $w={145} $h={49}><Value $w={119}>14.08</Value></DisplayBox>
    <Label $x={1253} $y={1131}>EVM %</Label>

    {[
      { y: 1176, tag: "[Tx]", value: "30.31", name: "Tx power in dBm" },
      { y: 1248, tag: "[Rx]", value: "29.70", name: "Gained up rx power in dBm" },
    ].map((r) => (
      <React.Fragment key={r.tag}>
        <Tag x={741} y={r.y + 5}>{r.tag}</Tag>
        <NodeBox $x={837} $y={r.y} $w={121} $h={59}>RMS</NodeBox>
        <NodeBox $x={1021} $y={r.y - 2} $w={97} $h={62} $pt={2}>
          <span>dBm</span>
          <Shifted>(1 ohm)</Shifted>
          <LinkArrow />
        </NodeBox>
        <DisplayBox $x={1181} $y={r.y + 5} $w={145} $h={49}><Value $w={119}>{r.value}</Value></DisplayBox>
        <Label $x={1253} $y={r.y + 67}>{r.name}</Label>
      </React.Fragment>
    ))}
  </Canvas>
);

/* ---------- model window ---------- */

const Controls = () => (
  <WindowControls>
    <WindowButton aria-label="Minimize"><MinIcon /></WindowButton>
    <WindowButton aria-label="Maximize"><MaxIcon /></WindowButton>
    <WindowButton aria-label="Close"><CloseIcon /></WindowButton>
  </WindowControls>
);

const ModelToolbar = () => (
  <ModelBars role="toolbar">
    <ModelTool $w={24} aria-label="Library">
      <svg width="24" height="44" viewBox="0 0 24 44" fill="url(#dim)" stroke={DIM} strokeWidth="2">
        <rect x="-20" y="1" width="37" height="18" /><rect x="-20" y="25" width="37" height="18" />
        <path d="M-2 14l5-8 5 8 5-8M0 38v-6h8v-4h6" fill="none" />
      </svg>
    </ModelTool>
    <ModelTool $w={50} aria-label="Model configuration">
      <Ico size={42} box={42}>
        <path d={gearPath(21, 21, 20, 12, 4)} fill="url(#dim)" stroke={DIM} strokeWidth="2" />
        <circle cx="21" cy="21" r="10" fill="#c4c4c4" stroke={DIM} strokeWidth="2" />
        <circle cx="21" cy="21" r="5" fill="#eee" stroke={DIM} strokeWidth="2" />
      </Ico>
    </ModelTool>
    <ModelCaret $w={30}><DimCaret /></ModelCaret>
    <ModelTool $w={48} aria-label="Model explorer">
      <svg width="40" height="37" viewBox="0 0 40 37" stroke={DIM} strokeWidth="2" fill="url(#dim)">
        <rect x="1" y="1" width="38" height="35" /><path d="M1 7h38" />
        <path d="M6 14h28M6 29h28" strokeDasharray="8 2.500" strokeWidth="3" /><rect x="5" y="19" width="30" height="5" />
        <path d="M14 19v5M25 19v5" />
      </svg>
    </ModelTool>
    <ModelCaret $w={30}><DimCaret /></ModelCaret>
    <ModelDivider />
    <ModelTool $w={60} aria-label="Update diagram">
      <svg width="48" height="36" viewBox="0 0 48 36" stroke={DIM} strokeWidth="2" fill="url(#dim)">
        <path d="M1 10h17v15H1z" />
        <path d="M18 24c-1-9 5-16 15-16V1l8 8c4 1 6 4 6 8 0 7-5 11-14 12v6l-8-8c-4 0-6-1-7-3z" />
        <path d="M25 22v-5c0-3 4-5 8-4l4 4M41 14v5c0 3-4 5-8 4l-4-4" fill="none" />
      </svg>
    </ModelTool>
    <ModelTool $w={54} aria-label="Step back">
      <svg width="38" height="40" viewBox="0 0 38 40" stroke={DIM} strokeWidth="2" fill="url(#dim)">
        <path d="M18 2v30L1 17z" /><path d="M24 2h6v22h-6z" />
        <path d={gearPath(28, 29, 9, 8, 2)} /><circle cx="28" cy="29" r="3" />
      </svg>
    </ModelTool>
    <ModelTool $w={52} aria-label="Run">
      <Ico size={44} box={44}><circle cx="22" cy="22" r="21" fill="url(#dim)" stroke={DIM} strokeWidth="2" /><path d="M16 12l16 10-16 10z" fill="#9b9b9b" /></Ico>
    </ModelTool>
    <ModelTool $w={56} aria-label="Step forward">
      <svg width="32" height="34" viewBox="0 0 32 34" stroke={DIM} strokeWidth="2" fill="url(#dim)"><path d="M1 2h6v30H1zM12 2v30l19-15z" /></svg>
    </ModelTool>
    <ModelTool $w={54} aria-label="Stop">
      <Ico size={44} box={44}><circle cx="22" cy="22" r="21" fill="url(#dim)" stroke={DIM} strokeWidth="2" /><rect x="14" y="14" width="16" height="16" fill="#9b9b9b" /></Ico>
    </ModelTool>
    <ModelCaret $w={6} />
    <ModelDivider $short />
    <ModelTool $w={62} aria-label="Data inspector">
      <Ico size={44} box={44}>
        <rect x="1" y="1" width="42" height="42" fill="#f0f0f0" stroke={DIM} strokeWidth="2" />
        <path d="M1 10c5 0 7 19 11 19S21 9 27 9s9 8 15 15" fill="none" stroke={DIM} strokeWidth="2.500" />
        <path d="M1 29c14 2 14-24 24-24 8 0 10 12 16 22" fill="none" stroke="#c9c9c9" strokeWidth="2" />
      </Ico>
    </ModelTool>
    <ModelCaret $w={18}><DimCaret /></ModelCaret>
    <StopTime aria-label="Simulation stop time" defaultValue="inf" />
    <SelectWrap>
      <ModeSelect aria-label="Simulation mode" defaultValue="Normal"><option>Normal</option></ModeSelect>
      <svg width="8" height="5" viewBox="0 0 8 5"><path d="M0 0h8L4 5z" fill="#777" /></svg>
    </SelectWrap>
    <ModelDivider />
    <ModelTool $w={58} aria-label="Model advisor">
      <Ico size={38} box={38}><circle cx="19" cy="19" r="17.500" fill="url(#dim)" stroke={DIM} strokeWidth="2" /><path d="M11 20l6 6 10-15" fill="none" stroke="#a9a9a9" strokeWidth="4" /></Ico>
    </ModelTool>
    <ModelCaret $w={22}><DimCaret /></ModelCaret>
    <ModelDivider />
    <ModelTool $w={60} aria-label="Build model">
      <svg width="40" height="42" viewBox="0 0 40 42" stroke={DIM} strokeWidth="2">
        <path d="M7 1v12M19 1v12M31 1v12" strokeDasharray="3 2" />
        <path d="M3 8h8l-4 7zM15 8h8l-4 7zM27 8h8l-4 7z" fill="#a5a5a5" stroke="none" />
        <rect x="1" y="18" width="38" height="22" rx="5" fill="#e9e9e9" />
        <path d="M7 25.500h27M7 33.500h27" stroke="#a5a5a5" strokeWidth="4" strokeDasharray="4 4" />
      </svg>
    </ModelTool>
    <ModelCaret $w={22}><DimCaret /></ModelCaret>
  </ModelBars>
);

const menu = (items: string[]) => items.map((m) => <MenuButton key={m}>{m}</MenuButton>);

export default function App() {
  return (
    <Desktop>
      <GlobalStyle />
      <Defs />
      <PageBehind />

      <ModelWindow $shadow="0 0 48px rgba(0,0,0,.35)" aria-label="Model editor">
        <TitleBar $h={54} $bg="#f3f3f3" $color="#8a8a8a"><Controls /></TitleBar>
        <MenuBar $h={35} $left={412} $color="#6b6b6b">{menu(["Simulation", "Analysis", "Code", "Tools", "Help"])}</MenuBar>
        <ModelToolbar />
        <Spacer />
        <PathBar />
        <Workspace>
          <Palette><button aria-label="Screenshot"><CameraIcon /></button></Palette>
          <Diagram />
        </Workspace>
      </ModelWindow>

      <OutputWindow $radius="16px" $shadow="0 0 0 2px rgba(140,140,140,.7), 0 24px 64px rgba(0,0,0,.36)" aria-label="Output">
        <Clip>
          <TitleBar $h={67} $bg="#f3f3f3" $color="#8f8f8f" $top={9} $left={15}>
            <MatlabIcon /><TitleText>Output</TitleText><Controls />
          </TitleBar>
          <MenuBar $h={41} $left={9}>
            {menu(["File", "Tools", "View", "Simulation", "Help"])}
            <DockButton aria-label="Dock"><DockIcon /></DockButton>
          </MenuBar>
          <ToolBar role="toolbar" $left={1}>
            <SplitButton $wide aria-label="Spectrum settings"><SpectrumGearIcon /><Caret /></SplitButton>
            <Divider />
            <ToolButton aria-label="Run"><RunIcon /></ToolButton>
            <ToolButton aria-label="Step"><StepIcon /></ToolButton>
            <ToolButton aria-label="Stop"><StopIcon /></ToolButton>
            <Divider />
            <SplitButton $wide aria-label="Highlight block"><ModelIcon /><Caret /></SplitButton>
            <Divider />
            <SplitButton $wide aria-label="Zoom"><ZoomIcon /><Caret /></SplitButton>
            <Divider />
            <ToolButton aria-label="Autoscale"><AutoscaleIcon /></ToolButton>
            <Divider />
            <ToolButton aria-label="Spectral mask"><MaskIcon /></ToolButton>
            <Divider />
            <ToolButton aria-label="Peak finder"><CursorIcon /></ToolButton>
            <ToolButton aria-label="Cursors"><RulerIcon /></ToolButton>
            <ToolButton aria-label="Channel"><ChannelIcon /></ToolButton>
            <ToolButton aria-label="Distortion"><DistortionIcon /></ToolButton>
            <ToolButton aria-label="CCDF"><CcdfIcon /></ToolButton>
          </ToolBar>
          <ChartArea $h={548}><SpectrumChart /></ChartArea>
          <StatusBar><span>Ready</span><StatusCell $w={300} /></StatusBar>
        </Clip>
      </OutputWindow>

      <ScatterWindow $radius="16px" $shadow="0 0 0 2px rgba(120,120,120,.7), 0 40px 96px rgba(0,0,0,.42), 0 0 24px rgba(0,0,0,.15)" aria-label="Scatter plot">
        <Clip>
          <TitleBar $h={56} $bg="#eaf4f7" $color="#000" $left={14}>
            <MatlabIcon /><TitleText>Discrete-Time Scatt...</TitleText><Controls />
          </TitleBar>
          <MenuBar $h={41} $left={7}>
            <MenuButton><u>F</u>ile</MenuButton>
            <MenuButton><u>T</u>ools</MenuButton>
            <MenuButton><u>V</u>iew</MenuButton>
            <MenuButton>S<u>i</u>mulation</MenuButton>
            <MenuButton><u>H</u>elp</MenuButton>
            <DockButton aria-label="Dock"><DockIcon /></DockButton>
          </MenuBar>
          <ToolBar role="toolbar">
            <SplitButton aria-label="Settings"><GearIcon /><Caret /></SplitButton>
            <Divider />
            <ToolButton aria-label="Print"><PrinterIcon /></ToolButton>
            <Divider />
            <ToolButton aria-label="Run"><RunIcon /></ToolButton>
            <ToolButton aria-label="Step"><StepIcon /></ToolButton>
            <ToolButton aria-label="Stop"><StopIcon /></ToolButton>
            <Divider />
            <SplitButton aria-label="Highlight block"><ModelIcon /><Caret /></SplitButton>
            <Divider />
            <SplitButton aria-label="Zoom"><ZoomIcon /><Caret /></SplitButton>
            <SplitButton aria-label="Fit"><FitIcon /><Caret /></SplitButton>
            <Divider />
            <ToolButton aria-label="Signal trajectory"><TrajectoryIcon /></ToolButton>
            <Divider />
            <ToolButton aria-label="Reference constellation"><ReferenceIcon /></ToolButton>
          </ToolBar>
          <ChartArea $h={514}><ScatterChart /></ChartArea>
          <StatusBar><span>Ready</span><StatusCell>T=0.005</StatusCell></StatusBar>
        </Clip>
      </ScatterWindow>

      <Annotation aria-hidden>
        <rect x="1351.500" y="967.500" width="227" height="129" fill="none" stroke="#fb3939" strokeWidth="7" />
        <path d="M728 924l18-7 1 5 577 93-578-85-2 4z" fill="#ff0000" />
      </Annotation>
    </Desktop>
  );
}
